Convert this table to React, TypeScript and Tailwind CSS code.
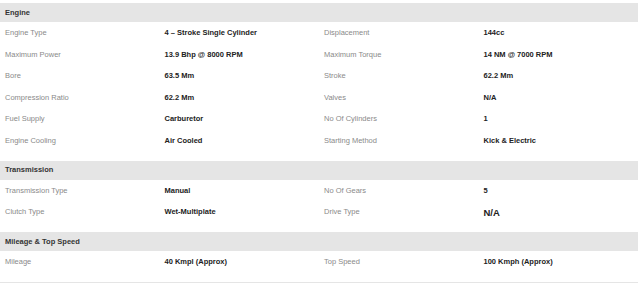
import React from "react";

type Row = [string, string, string, string];

const sections: { title: string; rows: Row[] }[] = [
  {
    title: "Engine",
    rows: [
      ["Engine Type", "4 – Stroke Single Cylinder", "Displacement", "144cc"],
      ["Maximum Power", "13.9 Bhp @ 8000 RPM", "Maximum Torque", "14 NM @ 7000 RPM"],
      ["Bore", "63.5 Mm", "Stroke", "62.2 Mm"],
      ["Compression Ratio", "62.2 Mm", "Valves", "N/A"],
      ["Fuel Supply", "Carburetor", "No Of Cylinders", "1"],
      ["Engine Cooling", "Air Cooled", "Starting Method", "Kick & Electric"],
    ],
  },
  {
    title: "Transmission",
    rows: [
      ["Transmission Type", "Manual", "No Of Gears", "5"],
      ["Clutch Type", "Wet-Multiplate", "Drive Type", "N/A*"],
    ],
  },
  {
    title: "Mileage & Top Speed",
    rows: [["Mileage", "40 Kmpl (Approx)", "Top Speed", "100 Kmph (Approx)"]],
  },
];

function Value({ v }: { v: string }) {
  if (v === "N/A*") {
    return <span className="text-[9.5px] font-bold text-[#222] pt-[2px]">N/A</span>;
  }
  return <span className="text-[7.5px] font-bold text-[#222]">{v}</span>;
}

export default function App() {
  return (
    <div
      className="w-[640px] h-[283px] overflow-hidden bg-white pt-[3px] pr-[2px]"
      style={{ fontFamily: '"Liberation Sans", Arial, sans-serif' }}
    >
      {sections.map((s) => (
        <div key={s.title} className="mb-[9.5px]">
          <div className="h-[19px] bg-[#e5e5e5] flex items-center pl-[5px] text-[7.5px] font-bold text-[#333]">
            {s.title}
          </div>
          {s.rows.map((r) => (
            <div key={r[0]} className="h-[21.5px] grid grid-cols-4 items-center">
              <span className="pl-[5px] text-[7.5px] text-[#8a8a8a]">{r[0]}</span>
              <span className="pl-[5px] flex items-center"><Value v={r[1]} /></span>
              <span className="pl-[5px] text-[7.5px] text-[#8a8a8a]">{r[2]}</span>
              <span className="pl-[5px] flex items-center"><Value v={r[3]} /></span>
            </div>
          ))}
        </div>
      ))}
      <div className="h-[19px] bg-[#e5e5e5]" />
    </div>
  );
}
